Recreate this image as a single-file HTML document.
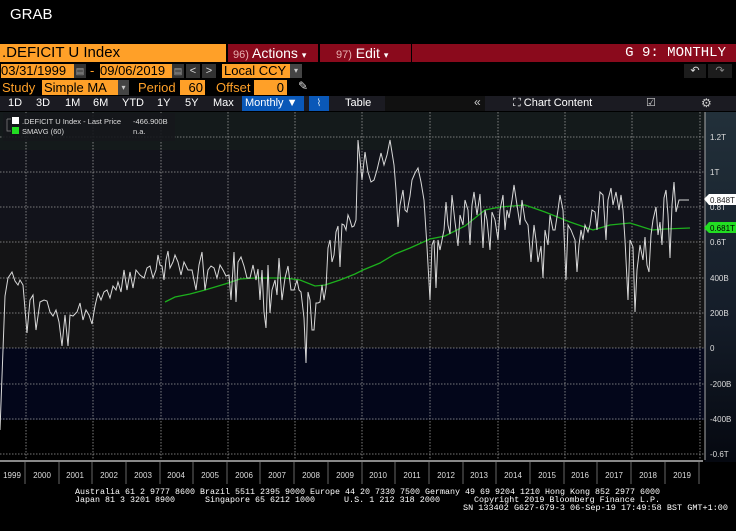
<!DOCTYPE html>
<html><head><meta charset="utf-8"><style>
*{margin:0;padding:0;box-sizing:border-box}
body{width:736px;height:531px;background:#000;overflow:hidden;font-family:"Liberation Sans",sans-serif;position:relative;color:#fff}
.a{position:absolute;white-space:nowrap}
.or{background:#ffa028;color:#000}
.rd{background:#8a0a1c;color:#fff}
</style></head><body>
<div class="a" style="left:10px;top:6px;font-size:15px">GRAB</div>
<div class="a or" style="left:0;top:44px;width:226px;height:18px;font-size:15px;line-height:18px;padding-left:2px">.DEFICIT U Index</div>
<div class="a rd" style="left:228px;top:44px;width:90px;height:18px;font-size:14px;line-height:18px;padding-left:5px"><span style="font-size:11px;color:#e8b0b0">96)</span> Actions <span style="font-size:9px">▾</span></div>
<div class="a rd" style="left:320px;top:44px;width:91px;height:18px;font-size:14px;line-height:18px;padding-left:16px"><span style="font-size:11px;color:#e8b0b0">97)</span> Edit <span style="font-size:9px">▾</span></div>
<div class="a rd" style="left:412px;top:44px;width:324px;height:18px;font-size:14px;line-height:18px;text-align:right;padding-right:10px;font-family:'Liberation Mono',monospace">G 9: MONTHLY</div>
<div class="a or" style="left:1px;top:64px;width:73px;height:14px;font-size:13px;line-height:14px">03/31/1999</div>
<div class="a" style="left:74px;top:64px;width:12px;height:14px;background:#333;color:#aaa;font-size:9px;text-align:center;line-height:14px">▤</div>
<div class="a" style="left:90px;top:63px;font-size:13px;color:#ffa028">-</div>
<div class="a or" style="left:100px;top:64px;width:72px;height:14px;font-size:13px;line-height:14px">09/06/2019</div>
<div class="a" style="left:172px;top:64px;width:12px;height:14px;background:#333;color:#aaa;font-size:9px;text-align:center;line-height:14px">▤</div>
<div class="a" style="left:186px;top:64px;width:14px;height:14px;background:#333;color:#ddd;font-size:11px;text-align:center;line-height:14px">&lt;</div>
<div class="a" style="left:202px;top:64px;width:14px;height:14px;background:#333;color:#ddd;font-size:11px;text-align:center;line-height:14px">&gt;</div>
<div class="a or" style="left:222px;top:64px;width:68px;height:14px;font-size:13px;line-height:14px;padding-left:2px">Local CCY</div>
<div class="a" style="left:290px;top:64px;width:12px;height:14px;background:#444;color:#ccc;font-size:8px;text-align:center;line-height:14px">▾</div>
<div class="a" style="left:684px;top:64px;width:22px;height:14px;background:#1c1c1c;color:#ddd;font-size:11px;text-align:center;line-height:14px">↶</div>
<div class="a" style="left:708px;top:64px;width:24px;height:14px;background:#1c1c1c;color:#888;font-size:11px;text-align:center;line-height:14px">↷</div>
<div class="a" style="left:2px;top:80px;font-size:13px;color:#ffa028;line-height:15px">Study</div>
<div class="a or" style="left:42px;top:80px;width:76px;height:15px;font-size:13px;line-height:15px;padding-left:2px">Simple MA</div>
<div class="a" style="left:118px;top:80px;width:11px;height:15px;background:#444;color:#ccc;font-size:8px;text-align:center;line-height:15px">▾</div>
<div class="a" style="left:138px;top:80px;font-size:13px;color:#ffa028;line-height:15px">Period</div>
<div class="a or" style="left:180px;top:80px;width:25px;height:15px;font-size:13px;line-height:15px;text-align:right;padding-right:2px">60</div>
<div class="a" style="left:216px;top:80px;font-size:13px;color:#ffa028;line-height:15px">Offset</div>
<div class="a or" style="left:254px;top:80px;width:33px;height:15px;font-size:13px;line-height:15px;text-align:right;padding-right:3px">0</div>
<div class="a" style="left:298px;top:79px;font-size:12px;color:#ddd">✎</div>
<div class="a" style="left:0;top:96px;width:736px;height:15px;background:#1b1b22"></div>
<div class="a" style="left:0;top:96px;font-size:11px;line-height:15px;color:#fff">
<span class="a" style="left:8px">1D</span><span class="a" style="left:36px">3D</span><span class="a" style="left:65px">1M</span><span class="a" style="left:93px">6M</span><span class="a" style="left:122px">YTD</span><span class="a" style="left:157px">1Y</span><span class="a" style="left:185px">5Y</span><span class="a" style="left:213px">Max</span></div>
<div class="a" style="left:242px;top:96px;width:62px;height:15px;background:#0a58b8;font-size:11px;line-height:15px;padding-left:3px">Monthly ▼</div>
<div class="a" style="left:309px;top:96px;width:20px;height:15px;background:#0a58b8;color:#cde;font-size:10px;text-align:center;line-height:15px">⌇</div>
<div class="a" style="left:345px;top:96px;font-size:11px;line-height:15px">Table</div>
<div class="a" style="left:385px;top:96px;width:100px;height:15px;background:#111"></div>
<div class="a" style="left:474px;top:95px;font-size:12px;line-height:15px;color:#ccc">«</div>
<div class="a" style="left:513px;top:96px;font-size:11px;line-height:15px">⛶ Chart Content</div>
<div class="a" style="left:646px;top:96px;font-size:11px;line-height:15px;color:#ccc">☑</div>
<div class="a" style="left:701px;top:96px;font-size:12px;line-height:15px;color:#ccc">⚙</div>
<svg class="a" style="left:0;top:112px" width="736" height="350" viewBox="0 112 736 350">
<defs><linearGradient id="ax" x1="0" y1="0" x2="0" y2="1"><stop offset="0" stop-color="#22303a"/><stop offset="0.6" stop-color="#141c28"/><stop offset="1" stop-color="#050810"/></linearGradient></defs>
<rect x="0" y="112" width="705" height="38" fill="#141a1b"/>
<rect x="0" y="150" width="705" height="90" fill="#12131b"/>
<rect x="0" y="240" width="705" height="108" fill="#141415"/>
<rect x="0" y="348" width="705" height="72" fill="#03061a"/>
<rect x="0" y="420" width="705" height="42" fill="#000"/>
<rect x="705" y="112" width="31" height="350" fill="url(#ax)"/>
<g stroke="#9a9a9a" stroke-width="0.8" stroke-dasharray="1.5,1.5">
<line x1="0" y1="137" x2="705" y2="137"/><line x1="0" y1="172" x2="705" y2="172"/><line x1="0" y1="207" x2="705" y2="207"/><line x1="0" y1="242" x2="705" y2="242"/><line x1="0" y1="278" x2="705" y2="278"/><line x1="0" y1="313" x2="705" y2="313"/><line x1="0" y1="348" x2="705" y2="348"/><line x1="0" y1="384" x2="705" y2="384"/><line x1="0" y1="419" x2="705" y2="419"/><line x1="0" y1="454" x2="705" y2="454"/>
<line x1="26" y1="112" x2="26" y2="460"/><line x1="93" y1="112" x2="93" y2="460"/><line x1="161" y1="112" x2="161" y2="460"/><line x1="228" y1="112" x2="228" y2="460"/><line x1="295" y1="112" x2="295" y2="460"/><line x1="362" y1="112" x2="362" y2="460"/><line x1="430" y1="112" x2="430" y2="460"/><line x1="498" y1="112" x2="498" y2="460"/><line x1="565" y1="112" x2="565" y2="460"/><line x1="632" y1="112" x2="632" y2="460"/><line x1="700" y1="112" x2="700" y2="460"/>
</g>
<line x1="705" y1="112" x2="705" y2="460" stroke="#aaa" stroke-width="1"/>
<g font-family="Liberation Sans" font-size="8" fill="#ddd">
<text x="710" y="140">1.2T</text><text x="710" y="175">1T</text><text x="710" y="210">0.8T</text><text x="710" y="245">0.6T</text><text x="710" y="281">400B</text><text x="710" y="316">200B</text><text x="710" y="351">0</text><text x="710" y="387">-200B</text><text x="710" y="422">-400B</text><text x="710" y="457">-0.6T</text>
</g>
<polygon points="704,199 709,194 736,194 736,205 709,205" fill="#fff"/>
<text x="710" y="203" font-family="Liberation Sans" font-size="8" fill="#222">0.848T</text>
<polygon points="704,228 709,222 736,222 736,233 709,233" fill="#22dd22"/>
<text x="710" y="231" font-family="Liberation Sans" font-size="8" fill="#000">0.681T</text>
<polyline fill="none" stroke="#1db01d" stroke-width="1.3" points="165,302 175,297 190,294 205,290 225,284 240,279 255,278 270,278 285,278 300,280 315,286 325,285 340,280 355,274 363,270 380,263 395,254 410,248 430,239 445,236 465,226 485,210 500,207 525,205 545,212 570,222 593,230 610,225 630,223 652,230 665,229 690,228"/>
<polyline fill="none" stroke="#d8d8d8" stroke-width="1" points="0,430 5,296 8,278 12,272 15,281 18,285 20,280 23,285 27,333 30,300 33,295 36,330 40,302 44,300 47,301 50,312 53,316 56,310 59,322 62,346 65,315 68,346 70,315 73,316 77,312 80,303 83,320 86,310 89,315 92,324 95,306 98,293 101,300 104,292 107,290 110,298 113,286 116,290 118,282 121,292 124,270 127,290 130,272 133,288 136,270 140,275 144,278 147,268 150,266 153,278 156,270 158,255 160,265 162,266 164,280 166,260 168,251 170,268 173,262 175,255 178,262 181,275 184,262 188,270 192,270 196,290 199,265 202,252 205,290 208,270 211,266 214,268 217,278 220,265 223,270 226,276 229,275 231,300 234,252 236,302 238,262 241,257 244,266 247,278 250,278 253,265 256,280 258,269 260,300 262,270 264,312 266,328 268,265 270,313 272,290 275,280 277,295 279,258 282,300 285,278 288,266 291,290 294,290 297,280 299,290 301,292 304,318 306,363 308,292 310,300 312,330 314,330 316,303 318,303 320,302 322,285 324,300 326,288 328,248 330,240 332,262 334,255 336,232 338,226 340,267 342,224 344,225 346,230 348,215 350,220 352,227 354,226 356,220 357,181 358,140 360,160 362,180 365,152 368,172 371,182 374,180 377,170 381,153 384,165 387,155 390,140 394,165 396,190 398,227 400,205 403,190 405,210 407,212 410,196 412,180 415,173 418,168 421,182 424,200 427,247 430,300 432,245 434,240 436,288 438,240 440,250 442,240 444,230 446,202 448,225 450,234 452,195 455,222 458,246 460,215 463,225 465,200 468,210 470,245 472,205 474,192 477,215 480,194 483,248 485,210 487,220 490,250 492,212 495,220 498,240 500,210 503,195 505,230 507,210 509,218 512,200 514,185 517,205 520,225 522,200 525,220 528,225 531,262 534,225 536,240 538,262 541,246 543,278 545,230 548,245 550,215 553,230 555,230 558,210 560,195 563,210 566,280 568,225 571,230 573,235 575,240 577,272 579,245 581,230 583,240 585,225 588,232 590,225 592,210 595,212 597,230 600,192 603,195 606,240 608,200 611,188 613,205 616,192 619,210 621,195 623,210 625,240 628,300 630,240 633,247 635,312 637,270 640,245 643,260 645,237 647,265 649,272 651,235 653,220 656,207 658,235 660,222 662,245 664,198 666,190 668,215 670,258 672,205 674,182 676,212 679,200 682,200 684,200 689,200"/>
<rect x="3" y="113" width="172" height="28" fill="#15171c" opacity="0.9"/>
<rect x="12" y="117" width="7" height="7" fill="#fff"/>
<rect x="12" y="127" width="7" height="7" fill="#22dd22"/>
<path d="M7,119 V131 H11 M7,119 H11" stroke="#888" stroke-width="0.7" fill="none"/>
<g font-family="Liberation Sans" font-size="7.5" fill="#ddd">
<text x="22" y="124">.DEFICIT U Index - Last Price</text><text x="133" y="124">-466.900B</text>
<text x="22" y="134">SMAVG (60)</text><text x="133" y="134">n.a.</text></g>
</svg>
<svg class="a" style="left:0;top:460px" width="736" height="30">
<rect x="0" y="0" width="703" height="2" fill="#888"/>
<g stroke="#666" stroke-width="1"><line x1="25" y1="2" x2="25" y2="24"/><line x1="59" y1="2" x2="59" y2="24"/><line x1="92" y1="2" x2="92" y2="24"/><line x1="126" y1="2" x2="126" y2="24"/><line x1="160" y1="2" x2="160" y2="24"/><line x1="193" y1="2" x2="193" y2="24"/><line x1="227" y1="2" x2="227" y2="24"/><line x1="260" y1="2" x2="260" y2="24"/><line x1="294" y1="2" x2="294" y2="24"/><line x1="328" y1="2" x2="328" y2="24"/><line x1="362" y1="2" x2="362" y2="24"/><line x1="395" y1="2" x2="395" y2="24"/><line x1="429" y1="2" x2="429" y2="24"/><line x1="463" y1="2" x2="463" y2="24"/><line x1="496" y1="2" x2="496" y2="24"/><line x1="530" y1="2" x2="530" y2="24"/><line x1="564" y1="2" x2="564" y2="24"/><line x1="597" y1="2" x2="597" y2="24"/><line x1="631" y1="2" x2="631" y2="24"/><line x1="665" y1="2" x2="665" y2="24"/><line x1="699" y1="2" x2="699" y2="24"/></g>
<g font-family="Liberation Sans" font-size="8" fill="#ddd" text-anchor="middle">
<text x="12" y="18">1999</text><text x="42" y="18">2000</text><text x="75" y="18">2001</text><text x="109" y="18">2002</text><text x="143" y="18">2003</text><text x="176" y="18">2004</text><text x="210" y="18">2005</text><text x="244" y="18">2006</text><text x="277" y="18">2007</text><text x="311" y="18">2008</text><text x="345" y="18">2009</text><text x="378" y="18">2010</text><text x="412" y="18">2011</text><text x="446" y="18">2012</text><text x="479" y="18">2013</text><text x="513" y="18">2014</text><text x="547" y="18">2015</text><text x="580" y="18">2016</text><text x="614" y="18">2017</text><text x="648" y="18">2018</text><text x="682" y="18">2019</text></g>
</svg>
<svg class="a" style="left:0;top:484px" width="736" height="40">
<g font-family="Liberation Mono" font-size="8.5" fill="#fff">
<text x="75" y="10" textLength="585" lengthAdjust="spacingAndGlyphs">Australia 61 2 9777 8600 Brazil 5511 2395 9000 Europe 44 20 7330 7500 Germany 49 69 9204 1210 Hong Kong 852 2977 6000</text>
<text x="75" y="18" textLength="100" lengthAdjust="spacingAndGlyphs">Japan 81 3 3201 8900</text>
<text x="205" y="18" textLength="110" lengthAdjust="spacingAndGlyphs">Singapore 65 6212 1000</text>
<text x="344" y="18" textLength="96" lengthAdjust="spacingAndGlyphs">U.S. 1 212 318 2000</text>
<text x="474" y="18" textLength="186" lengthAdjust="spacingAndGlyphs">Copyright 2019 Bloomberg Finance L.P.</text>
<text x="463" y="26" textLength="265" lengthAdjust="spacingAndGlyphs">SN 133402 G627-679-3 06-Sep-19 17:49:58 BST  GMT+1:00</text>
</g></svg>
</body></html>
